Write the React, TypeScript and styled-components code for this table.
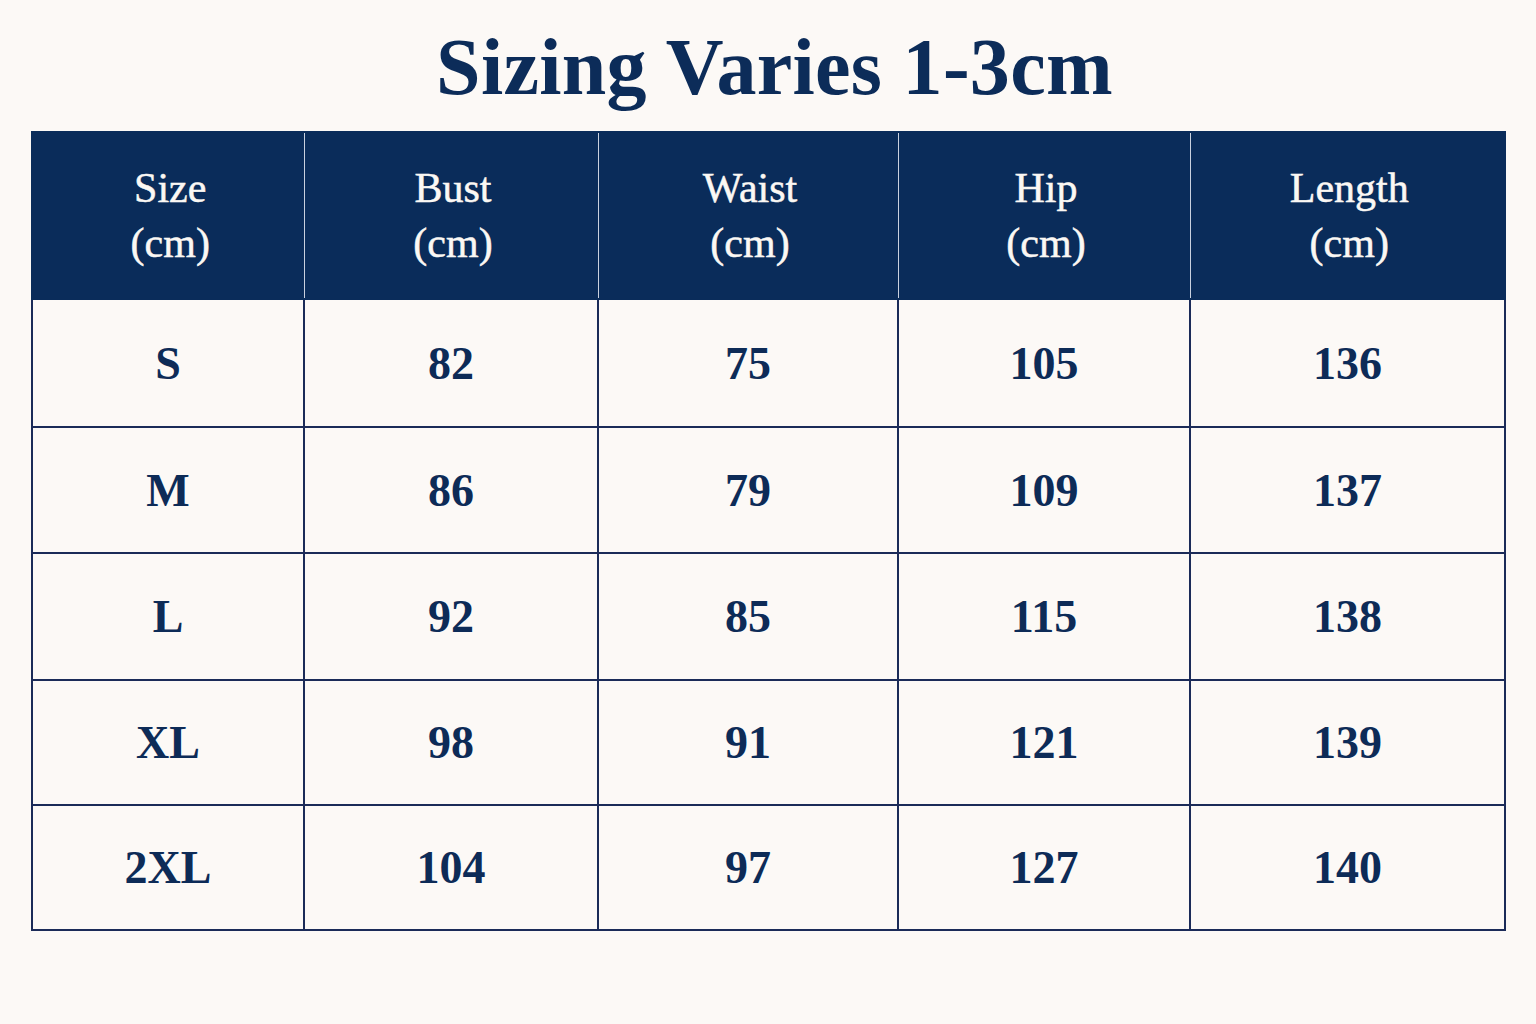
import React from 'react'
import styled, { createGlobalStyle } from 'styled-components'

const GlobalStyle = createGlobalStyle`
  html, body {
    margin: 0;
    padding: 0;
    background: #fcf9f6;
  }
  body {
    font-family: "Liberation Serif", "Times New Roman", serif;
    color: #0d2b57;
  }
`

const Page = styled.div`
  width: 1536px;
  height: 1024px;
  box-sizing: border-box;
  padding: 20px 32px 0 31px;
  background: #fcf9f6;
`

const Title = styled.h1`
  margin: 0 0 17px;
  padding-left: 14px;
  font-size: 80px;
  line-height: 94px;
  font-weight: 700;
  text-align: center;
  color: #0c2c59;
  letter-spacing: 0.3px;
`

const Table = styled.table`
  width: 1473px;
  table-layout: fixed;
  border-collapse: collapse;
`

const HeadRow = styled.tr`
  height: 167px;
  background: #0a2c5a;
`

const HeadCell = styled.th`
  padding: 0 0 0 4px;
  border: 2px solid #0a2c5a;
  border-left: 1px solid #c9d1df;
  border-right: 1px solid #c9d1df;
  color: #fbf8f4;
  font-size: 42px;
  line-height: 55px;
  font-weight: 400;
  -webkit-text-stroke: 0.5px #fbf8f4;
  text-align: center;
  vertical-align: middle;

  &:first-child {
    border-left: 2px solid #0a2c5a;
  }
  &:last-child {
    border-right: 2px solid #0a2c5a;
  }
`

const BodyRow = styled.tr<{ $h: number }>`
  height: ${(p) => p.$h}px;
`

const Cell = styled.td`
  padding: 0;
  border: 2px solid #1b2b58;
  font-size: 46px;
  font-weight: 700;
  text-align: center;
  vertical-align: middle;
  color: #0d2b57;
`

const widths = [272, 294, 300, 292, 315]
const heads = ['Size', 'Bust', 'Waist', 'Hip', 'Length']
const rows = [
  ['S', '82', '75', '105', '136'],
  ['M', '86', '79', '109', '137'],
  ['L', '92', '85', '115', '138'],
  ['XL', '98', '91', '121', '139'],
  ['2XL', '104', '97', '127', '140'],
]
const rowHeights = [128, 126, 127, 125, 125]

export default function App() {
  return (
    <>
      <GlobalStyle />
      <Page>
        <Title>Sizing Varies 1-3cm</Title>
        <Table>
          <colgroup>
            {widths.map((w, i) => (
              <col key={i} style={{ width: w }} />
            ))}
          </colgroup>
          <thead>
            <HeadRow>
              {heads.map((h) => (
                <HeadCell key={h}>
                  {h}
                  <br />
                  (cm)
                </HeadCell>
              ))}
            </HeadRow>
          </thead>
          <tbody>
            {rows.map((r, i) => (
              <BodyRow key={r[0]} $h={rowHeights[i]}>
                {r.map((v, j) => (
                  <Cell key={j}>{v}</Cell>
                ))}
              </BodyRow>
            ))}
          </tbody>
        </Table>
      </Page>
    </>
  )
}
